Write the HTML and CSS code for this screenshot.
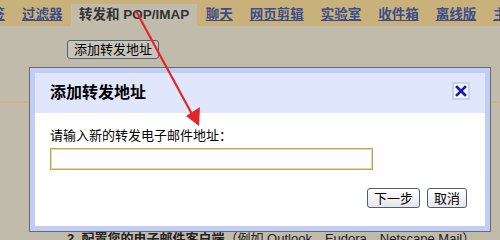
FILE: index.html
```html
<!DOCTYPE html>
<html lang="zh-CN">
<head>
<meta charset="utf-8">
<title>转发和 POP/IMAP</title>
<link rel="stylesheet" href="styles.css">
</head>
<body>
<div class="page">
  <nav class="tabs">
    <a class="tab first">标签</a>
    <a class="tab">过滤器</a>
    <span class="tab active">转发和 POP/IMAP</span>
    <a class="tab">聊天</a>
    <a class="tab">网页剪辑</a>
    <a class="tab">实验室</a>
    <a class="tab">收件箱</a>
    <a class="tab">离线版</a>
    <a class="tab">主题</a>
  </nav>
  <main class="content">
    <button class="btn add-btn">添加转发地址</button>
    <div class="separator"></div>
    <p class="step"><b>2. 配置您的电子邮件客户端</b>（例如 Outlook、Eudora、Netscape Mail）</p>
  </main>

  <div class="dialog">
    <div class="dialog-inner">
      <div class="dialog-head">
        <h2 class="dialog-title">添加转发地址</h2>
        <span class="close">
          <svg width="12" height="12" viewBox="0 0 12 12"><path d="M2 2 L10 10 M10 2 L2 10" stroke="#1f1b9e" stroke-width="2.6" stroke-linecap="square"/></svg>
        </span>
      </div>
      <div class="dialog-body">
        <label class="dialog-label">请输入新的转发电子邮件地址：</label>
        <input class="dialog-input" type="text">
        <div class="dialog-actions">
          <button class="btn dlg-btn">下一步</button>
          <button class="btn dlg-btn">取消</button>
        </div>
      </div>
    </div>
  </div>

  <svg class="arrow" width="500" height="240" viewBox="0 0 500 240">
    <line x1="136" y1="11" x2="193" y2="116" stroke="#e3262b" stroke-width="2.2"/>
    <polygon points="186,116 200,107 199,126" fill="#e3262b"/>
  </svg>
</div>
</body>
</html>
```

FILE: styles.css
```css
html, body {
  margin: 0;
  padding: 0;
}
body {
  width: 500px;
  height: 240px;
  overflow: hidden;
  background: #c1bbab;
  font-family: "Liberation Sans", "Noto Sans CJK SC", sans-serif;
}
.page {
  position: relative;
  width: 500px;
  height: 240px;
  overflow: hidden;
}
.tabs {
  display: flex;
  align-items: flex-end;
  height: 26px;
  background: #c9b17b;
  white-space: nowrap;
}
.tab {
  flex: none;
  display: block;
  height: 22px;
  line-height: 22px;
  padding: 0 8.5px;
  font-size: 13.5px;
  font-weight: bold;
  color: #3b4d8c;
  text-decoration: underline;
}
.tab.first {
  margin-left: -30.5px;
}
.tab.active {
  background: #c1bbab;
  color: #333;
  text-decoration: none;
  padding: 0 8px;
}
.content {
  display: flex;
  flex-direction: column;
  align-items: flex-start;
  padding-left: 67px;
}
.btn {
  font-family: "Liberation Sans", "Noto Sans CJK SC", sans-serif;
  font-size: 13px;
  line-height: 17px;
  height: 19px;
  padding: 0 6px;
  border: 1px solid #56607a;
  border-radius: 3px;
  color: #000;
  margin: 0;
  white-space: nowrap;
}
.add-btn {
  margin-top: 14px;
  background: #c9c5b9;
}
.separator {
  margin-top: 42px;
  margin-left: -67px;
  width: 500px;
  height: 2px;
  background: #c9b387;
}
.step {
  margin: 128px 0 0 0;
  font-size: 13px;
  line-height: 16px;
  color: #222;
  white-space: nowrap;
}
.dialog {
  position: absolute;
  left: 29px;
  top: 67px;
  width: 450px;
  height: 153px;
  border: 1px solid #6b6b6b;
  background: #c1cdf6;
  padding: 5px;
  box-sizing: content-box;
}
.dialog-inner {
  display: flex;
  flex-direction: column;
  height: 100%;
}
.dialog-head {
  display: flex;
  align-items: center;
  justify-content: space-between;
  height: 40px;
  padding: 0 15px;
  background: #e0e6fb;
}
.dialog-title {
  margin: 0;
  font-size: 16px;
  font-weight: bold;
  line-height: 20px;
  color: #000;
  font-family: "Noto Sans CJK SC", sans-serif;
  margin-top: -4px;
}
.close {
  display: flex;
  align-items: center;
  justify-content: center;
  width: 14px;
  height: 14px;
  border: 2px solid #c3d0f8;
  background: #f2f4fe;
  margin-top: -4px;
}
.dialog-body {
  flex: 1;
  background: #fff;
  padding: 15px 18px 0 15px;
  display: flex;
  flex-direction: column;
  align-items: flex-start;
}
.dialog-label {
  font-size: 13px;
  line-height: 16px;
  color: #000;
}
.dialog-input {
  margin-top: 4px;
  width: 323px;
  height: 22px;
  box-sizing: border-box;
  border: 1px solid #c4a25a;
  box-shadow: inset 0 0 0 1px #e6d5aa;
  background: #fff;
  padding: 0 4px;
}
.dialog-actions {
  align-self: flex-end;
  display: flex;
  gap: 7px;
  margin-top: 18px;
}
.dlg-btn {
  height: 20px;
  padding: 0 6px;
  background: linear-gradient(#ffffff, #e6e6e6);
  border-color: #4f5d74;
}
.arrow {
  position: absolute;
  left: 0;
  top: 0;
  pointer-events: none;
}
```
